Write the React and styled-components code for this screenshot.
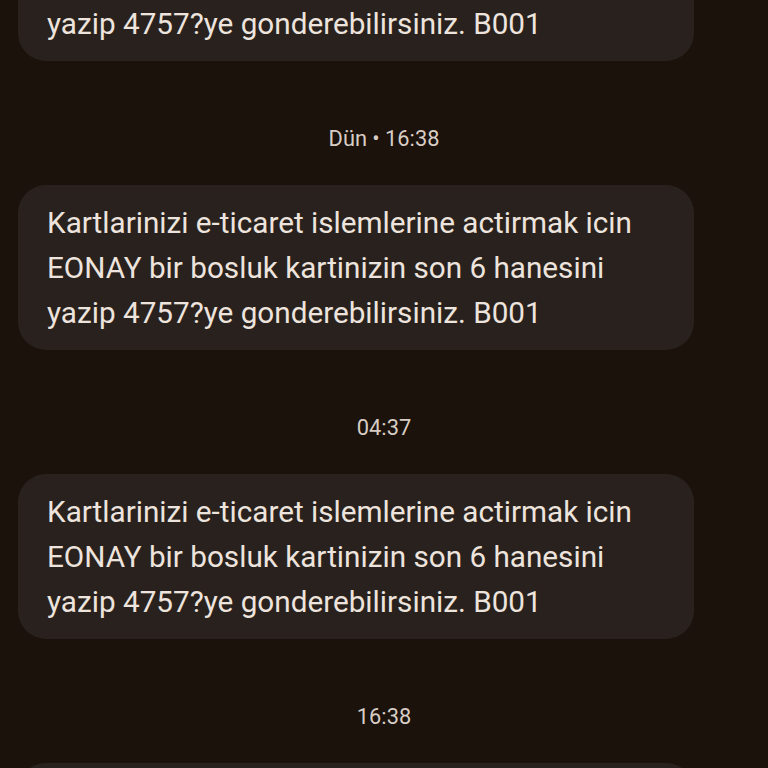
import React from "react";
import styled, { createGlobalStyle } from "styled-components";

const Global = createGlobalStyle`
  html, body { margin: 0; padding: 0; background: #1b120c; }
  body { width: 768px; height: 768px; overflow: hidden; }
`;

const Screen = styled.div`
  width: 768px;
  height: 768px;
  overflow: hidden;
  background: #1b120c;
  font-family: Roboto, "Noto Sans", sans-serif;
`;

const Thread = styled.div`
  display: flex;
  flex-direction: column;
  align-items: flex-start;
  margin-top: -104px;
  padding: 0 18px;
`;

const Bubble = styled.div`
  box-sizing: border-box;
  width: 676px;
  padding: 15px 29px 15px;
  background: #29211e;
  border-radius: 28px;
  color: #ede4dd;
  font-size: 29.7px;
  line-height: 45px;
  letter-spacing: 0;
`;

const Stamp = styled.div`
  align-self: center;
  margin: 63px 0 31px;
  height: 30px;
  line-height: 30px;
  font-size: 21.8px;
  color: #d8cdc4;
`;

const text =
  "Kartlarinizi e-ticaret islemlerine actirmak icin EONAY bir bosluk kartinizin son 6 hanesini yazip 4757?ye gonderebilirsiniz. B001";

const items = [
  { stamp: null },
  { stamp: "Dün • 16:38" },
  { stamp: "04:37" },
  { stamp: "16:38" },
];

export default function App() {
  return (
    <Screen>
      <Global />
      <Thread>
        {items.map((it, i) => (
          <React.Fragment key={i}>
            {it.stamp && <Stamp>{it.stamp}</Stamp>}
            <Bubble>{text}</Bubble>
          </React.Fragment>
        ))}
      </Thread>
    </Screen>
  );
}
